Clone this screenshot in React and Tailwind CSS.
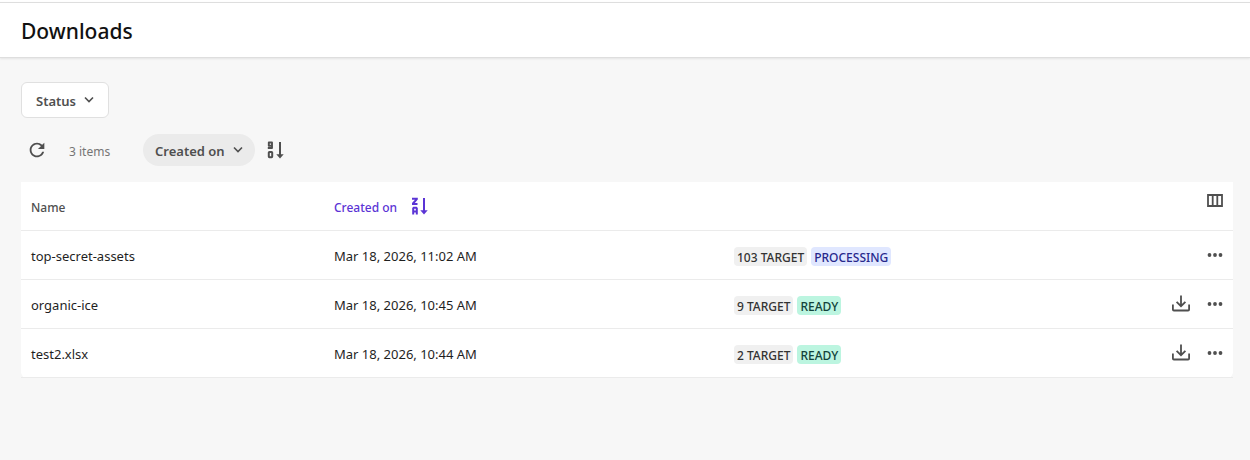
import React from "react";
import { MdRefresh } from "react-icons/md";

const rows = [
  { name: "top-secret-assets", created: "Mar 18, 2026, 11:02 AM", targets: 103, status: "PROCESSING" },
  { name: "organic-ice", created: "Mar 18, 2026, 10:45 AM", targets: 9, status: "READY" },
  { name: "test2.xlsx", created: "Mar 18, 2026, 10:44 AM", targets: 2, status: "READY" },
];

const statusStyles = {
  PROCESSING: "bg-[#e0e7ff] text-[#27278c]",
  READY: "bg-[#bcf5e0] text-[#12433a]",
};

function Chevron() {
  return (
    <svg width="10" height="10" viewBox="0 0 10 10" fill="none" stroke="currentColor" strokeWidth="1.6" aria-hidden="true">
      <path d="M1 2.5 5 6.5 9 2.5" />
    </svg>
  );
}

function SortIcon({ kind }) {
  return (
    <svg width="18" height="18" viewBox="0 0 18 18" fill="none" stroke="currentColor" strokeWidth="2" aria-hidden="true">
      {kind === "number" ? (
        <>
          <path d="M5 4.800H1.800V1.500H5V7H.8" strokeWidth="1.900" strokeLinejoin="round" />
          <rect x="1.800" y="11" width="3.400" height="5.200" rx="0.600" strokeWidth="2" />
        </>
      ) : (
        <>
          <path d="M1 1.700h4.800v.5L2 6.500V7h4.500" strokeWidth="2" />
          <path d="M2.200 17.500v-6.200l.5-.5h2.600l.5.5v6.200M2.200 14.600h3.600" strokeWidth="2" />
        </>
      )}
      <path d="M13 1v14" strokeWidth="2" />
      <path d="M9.300 13.300h7.400L13 17.500Z" fill="currentColor" stroke="none" />
    </svg>
  );
}

function ColumnsIcon() {
  return (
    <svg width="16" height="13" viewBox="0 0 16 13" fill="none" stroke="currentColor" strokeWidth="1.8" aria-hidden="true">
      <path d="M1 1h14v11H1zM5.700 1v11M10.300 1v11" />
    </svg>
  );
}

function DownloadIcon() {
  return (
    <svg width="20" height="17" viewBox="0 0 20 17" fill="none" stroke="currentColor" strokeWidth="1.8" aria-hidden="true">
      <path d="M10 .5v11M5.6 6.8 10 11.2l4.400-4.400M1.900 9.500v5a1 1 0 0 0 1 1h14.200a1 1 0 0 0 1-1v-5" />
    </svg>
  );
}

function DotsIcon() {
  return (
    <svg width="16" height="4" viewBox="0 0 16 4" fill="currentColor" aria-hidden="true">
      <circle cx="2.500" cy="2" r="1.900" />
      <circle cx="8" cy="2" r="1.900" />
      <circle cx="13.500" cy="2" r="1.900" />
    </svg>
  );
}

export default function App() {
  return (
    <div className="min-h-screen bg-[#f7f7f7] font-['Noto_Sans','Open_Sans',sans-serif] text-[13px] leading-5 text-[#1f1f1f]">
      <div className="h-0.5 bg-white" />
      <header className="border-y border-[#dedede] bg-white pt-[13px] pr-4 pb-[11px] pl-[21px] shadow-[0_1px_2px_rgba(0,0,0,0.08)]">
        <h1 className="text-[21px] leading-[30px] font-medium text-[#111]">Downloads</h1>
      </header>
      <main className="pt-6 pr-[17px] pl-[21px]">
        <button type="button" className="flex h-9 items-center gap-2 rounded-md border border-[#e0e0e0] bg-white px-3.5 font-semibold text-[#4f4f4f]">
          <span className="pt-0.5">Status</span>
          <Chevron />
        </button>
        <div className="mt-4 flex h-8 items-center text-[#4f4f4f]">
          <button type="button" aria-label="Refresh" className="flex size-8 items-center justify-center">
            <MdRefresh size={22} />
          </button>
          <span className="ml-4 w-[74px] pt-1 text-xs text-[#757575]">3 items</span>
          <button type="button" className="flex h-8 items-center gap-2 rounded-full bg-[#ebebeb] px-3 font-semibold">
            <span className="pt-0.5">Created on</span>
            <Chevron />
          </button>
          <button type="button" aria-label="Sort descending" className="ml-3">
            <SortIcon kind="number" />
          </button>
        </div>
        <table className="mt-4 w-full table-fixed border-separate border-spacing-0 rounded-b-md bg-white text-left">
          <colgroup>
            <col className="w-[25%]" />
            <col className="w-[33%]" />
            <col />
            <col className="w-[120px]" />
          </colgroup>
          <thead>
            <tr className="h-[49px]">
              <th scope="col" className="border-b border-[#ebebeb] px-2.5 pt-1 text-xs font-medium text-[#4f4f4f]">Name</th>
              <th scope="col" className="border-b border-[#ebebeb] px-2.5 text-xs font-medium text-[#5b34d5]">
                <button type="button" className="flex items-center gap-3.5">
                  <span className="pt-1">Created on</span>
                  <SortIcon kind="letter" />
                </button>
              </th>
              <th scope="col" aria-label="Status" className="border-b border-[#ebebeb]" />
              <th scope="col" className="border-b border-[#ebebeb] pr-2.5 pb-3 text-[#4f4f4f]">
                <button type="button" aria-label="Choose columns" className="ml-auto block">
                  <ColumnsIcon />
                </button>
              </th>
            </tr>
          </thead>
          <tbody>
            {rows.map((row) => (
              <tr key={row.name} className="h-[49px]">
                <td className="border-b border-[#ebebeb] px-2.5 pt-0.5">{row.name}</td>
                <td className="border-b border-[#ebebeb] px-2.5 pt-0.5">{row.created}</td>
                <td className="border-b border-[#ebebeb] px-2.5 pt-0.5">
                  <div className="flex gap-1 text-xs font-medium">
                    <span className="h-[19px] rounded bg-[#f0f0f0] px-[3px] leading-[21px] text-[#333]">{row.targets} TARGET</span>
                    <span className={`h-[19px] rounded px-[3px] leading-[21px] ${statusStyles[row.status]}`}>{row.status}</span>
                  </div>
                </td>
                <td className="border-b border-[#ebebeb] pr-2.5 text-[#4f4f4f]">
                  <div className="flex items-center justify-end gap-4">
                    {row.status === "READY" && (
                      <button type="button" aria-label={`Download ${row.name}`} className="pb-0.5">
                        <DownloadIcon />
                      </button>
                    )}
                    <button type="button" aria-label={`More actions for ${row.name}`} className="flex h-5 items-center">
                      <DotsIcon />
                    </button>
                  </div>
                </td>
              </tr>
            ))}
          </tbody>
        </table>
      </main>
    </div>
  );
}
